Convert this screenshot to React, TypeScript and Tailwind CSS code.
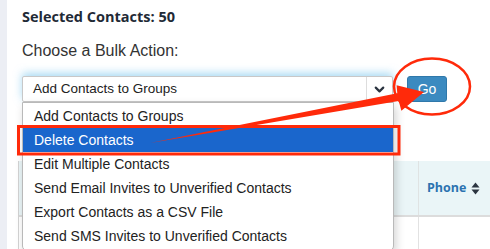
import { ChevronDown } from 'lucide-react'

const actions = [
  'Add Contacts to Groups',
  'Delete Contacts',
  'Edit Multiple Contacts',
  'Send Email Invites to Unverified Contacts',
  'Export Contacts as a CSV File',
  'Send SMS Invites to Unverified Contacts',
]

function SortIcon() {
  return (
    <svg width="9" height="13" viewBox="0 0 9 13" className="ml-[5px]">
      <path d="M4.5 0.5 L8.5 5.5 L0.5 5.5 Z" fill="#2b3440" />
      <path d="M4.5 12.5 L8.5 7.5 L0.5 7.5 Z" fill="#2b3440" />
    </svg>
  )
}

function Annotations() {
  return (
    <svg
      width="490"
      height="249"
      viewBox="0 0 490 249"
      className="absolute inset-0 pointer-events-none z-20"
    >
      <rect x="18.5" y="126.5" width="380.5" height="27.5" fill="none" stroke="#ff2a0a" strokeWidth="3" />
      <ellipse cx="432" cy="86.5" rx="38" ry="28" fill="none" stroke="#ff2a0a" strokeWidth="2.5" />
      <polygon
        points="150,143 397.3,93.2 396.6,85.2 424,92 401.4,110.8 398.7,100.9"
        fill="#ff2a0a"
      />
    </svg>
  )
}

export default function App() {
  return (
    <div className="relative w-[490px] h-[249px] overflow-hidden bg-white flex">
      <div className="w-[7px] shrink-0 bg-[#eceef4]" />
      <div className="flex-1 pl-[15px] pt-[8px] font-['Liberation_Sans',Arial,sans-serif]">
        <div className="font-['Open_Sans',sans-serif] font-bold text-[14.5px] leading-[18px] text-[#1f2a36]">
          Selected Contacts: 50
        </div>
        <div className="mt-[16px] text-[16px] leading-[18px] text-[#333]">Choose a Bulk Action:</div>

        <div className="mt-[16px] flex items-start">
          <div className="relative w-[371px] z-10">
            <div className="h-[26px] flex items-center border border-[#c8c8c8] rounded-[2px] bg-white shadow-[0_-3px_8px_rgba(102,190,233,0.55)]">
              <span className="flex-1 pl-[10px] text-[13.5px] text-[#222]">Add Contacts to Groups</span>
              <span className="w-[26px] h-full flex items-center justify-center border-l border-[#ddd]">
                <ChevronDown size={15} strokeWidth={3.5} color="#2b3440" />
              </span>
            </div>
            <div className="absolute top-[26px] left-0 w-[372px] bg-white border border-[#b9b9b9] rounded-b-[5px] shadow-[2px_4px_10px_rgba(0,0,0,0.18)] pt-[1px] pb-[2px]">
              {actions.map((a, i) => (
                <div
                  key={a}
                  className={
                    i === 1
                      ? 'h-[24px] flex items-center pl-[11px] text-[14px] bg-[#1a66cc] text-white'
                      : 'h-[24px] flex items-center pl-[11px] text-[14px] text-[#222]'
                  }
                >
                  {a}
                </div>
              ))}
            </div>
          </div>
          <button className="ml-[14px] w-[40px] h-[26px] rounded-[3px] bg-[#3b8ac0] text-white text-[14px] border border-[#2f78aa]">
            Go
          </button>
        </div>

        <div className="mt-[59px] -ml-[4px] border-l border-[#d4d4d4]">
          <div className="flex h-[56px] bg-[#eaf5f7] border-b-2 border-[#dcdcdc]">
            <div className="w-[400px] shrink-0 border-r border-[#dfe3e3]" />
            <div className="flex-1 flex items-center pl-[8px] font-['Open_Sans',sans-serif] font-bold text-[12.5px] text-[#2b72b0]">
              Phone
              <SortIcon />
            </div>
          </div>
          <div className="flex h-[40px]">
            <div className="w-[400px] shrink-0 border-r border-[#e2e2e2]" />
            <div className="flex-1" />
          </div>
        </div>
      </div>
      <Annotations />
    </div>
  )
}
